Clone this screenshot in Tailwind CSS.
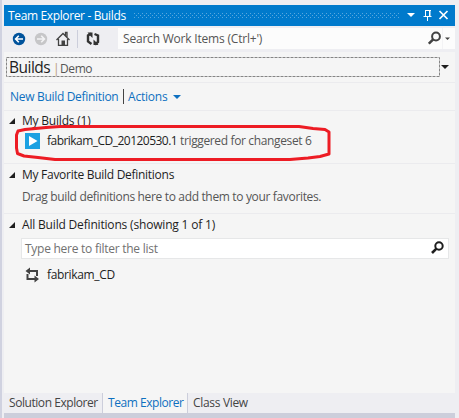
<!DOCTYPE html>
<html lang="en">
<head>
<meta charset="utf-8">
<title>Team Explorer - Builds</title>
<script src="https://cdn.jsdelivr.net/npm/@tailwindcss/browser@4"></script>
</head>
<body class="w-[459px] h-[418px] overflow-hidden bg-[#eeeef2] font-['Open_Sans','Noto_Sans',sans-serif] text-[12px] leading-[16px] text-[#1e1e1e] whitespace-nowrap">
<div class="relative w-[459px] h-[418px] border-l-2 border-[#d0d2e0] pl-[2px] pr-[4px] pt-[5px] flex flex-col">
  <header class="h-[21px] shrink-0 bg-[#007acc] text-white flex items-center pl-[4px]">
    <span class="w-[126px] tracking-[-0.36px]">Team Explorer - Builds</span>
    <svg class="w-[266px] h-[5px]" width="266" height="5" shape-rendering="crispEdges"><defs><pattern id="grip" width="4" height="4" patternUnits="userSpaceOnUse"><path fill="#59a8de" d="M0 0h1v1H0zM2 2h1v1H2z"/></pattern></defs><rect width="266" height="5" fill="url(#grip)"/></svg>
    <svg class="ml-[7px]" width="48" height="21" fill="none" stroke="#fff"><path fill="#fff" stroke="none" d="M0 8h8l-4 4z"/><path d="M18.500 5v6M23 5v6M18 5.500h6M16.500 11.500h8M20.500 12v4M22.500 5v6"/><path stroke-width="1.700" d="M32.500 6l8 8M40.500 6l-8 8"/></svg>
  </header>
  <div class="h-[26px] shrink-0 pt-[2px] flex">
    <svg class="w-[114px]" width="114" height="24" fill="none">
      <circle cx="15" cy="11" r="6.200" fill="#00539c"/><path stroke="#fff" stroke-width="1.600" d="M19 11h-7M14.800 7.800L11.600 11l3.200 3.200"/>
      <circle cx="37" cy="11" r="6.200" fill="#c6c6c8"/><path stroke="#f3f3f5" stroke-width="1.600" d="M33 11h7M37.200 7.800l3.200 3.200-3.200 3.200"/>
      <path stroke="#424242" stroke-width="1.300" d="M52.500 12L59 5.500l6.500 6.500M54.500 11v6.400h9V11M61.500 8V4.500h1.500v5"/><path fill="#424242" d="M57.500 12.500h3.500V17h-3.500z"/>
      <path stroke="#cccedb" d="M73.500 2v18"/>
      <path stroke="#333" stroke-width="2.400" d="M87.500 16L84 13.500V7.500L87 5.500M90.500 6L94 7.500V14L91 16.500"/><path fill="#333" d="M83.500 4.500H88.500V10L86.500 8zM94.500 17H89.500V11.500L91.500 13.500z"/>
    </svg>
    <div class="w-[337px] h-[21px] bg-[#fcfcfc] flex items-center text-[#555]">
      <span class="w-[310px] pl-[5px] tracking-[-0.2px]">Search Work Items (Ctrl+')</span>
      <svg width="27" height="21" fill="none"><circle cx="8" cy="8.500" r="3.900" stroke="#424242" stroke-width="2"/><path stroke="#424242" stroke-width="2.600" d="M5.200 11.300L.8 15.700"/><path stroke="#f3f3f5" d="M14.500 0v21"/><path fill="#424242" d="M17 9.500h5l-2.500 2.500z"/></svg>
    </div>
  </div>
  <main class="h-[341px] shrink-0 bg-[#f5f5f5] flex flex-col">
    <div class="h-[31px] shrink-0 border-b border-[#ebebee] pt-[5px] pl-[2px] flex">
      <div class="w-[434px] h-[20px]">
        <svg class="absolute" width="434" height="20"><rect x=".5" y=".5" width="433" height="19" fill="none" stroke="#858585" stroke-dasharray="3 1"/></svg>
        <div class="flex items-baseline pl-[3px] h-[20px] leading-[20px]">
          <span class="w-[42px] text-[15.500px] tracking-[-0.5px]">Builds</span><span class="w-[9px] pl-[2px] text-[#b99a78]">|</span><span class="text-[#555] tracking-[-0.4px]">Demo</span>
        </div>
      </div>
      <svg class="ml-[1px]" width="9" height="20"><path fill="#1e1e1e" d="M0 8h8L4 12z"/></svg>
    </div>
    <div class="h-[28px] shrink-0 border-b border-[#ebebee] flex items-center pl-[6px] text-[#0e70c0]">
      <span class="w-[113px] tracking-[-0.31px]">New Build Definition</span>
      <span class="w-px h-[15px] bg-[#444]"></span>
      <span class="ml-[4px] w-[45px] tracking-[-0.2px]">Actions</span>
      <svg width="8" height="6"><path fill="#0e70c0" d="M0 1h8L4 5z"/></svg>
    </div>
    <section class="h-[53px] shrink-0 border-b border-[#ebebee] pt-[2px]">
      <h2 class="flex items-center h-[16px] pl-[5px] font-medium"><svg class="w-[13px]" width="13" height="7"><path fill="#1e1e1e" d="M6 0v6H0z"/></svg><span class="tracking-[-0.2px]">My Builds (1)</span></h2>
      <div class="flex items-center h-[16px] mt-[4px] pl-[21px]">
        <svg class="w-[22px] shrink-0" width="15" height="16"><path fill="#1ba1e2" d="M0 0h15v16H0z"/><path fill="#fff" d="M4 3l8.500 5L4 13z"/></svg>
        <span class="w-[133px] tracking-[-0.53px]">fabrikam_CD_20120530.1</span><span class="text-[#555] tracking-[-0.36px]">triggered for changeset 6</span>
      </div>
    </section>
    <section class="h-[50px] shrink-0 border-b border-[#ebebee] pt-[3px]">
      <h2 class="flex items-center h-[16px] pl-[5px] font-medium"><svg class="w-[13px]" width="13" height="7"><path fill="#1e1e1e" d="M6 0v6H0z"/></svg><span class="tracking-[-0.28px]">My Favorite Build Definitions</span></h2>
      <p class="mt-[6px] pl-[18px] text-[#555] tracking-[-0.34px]">Drag build definitions here to add them to your favorites.</p>
    </section>
    <section class="pt-[3px]">
      <h2 class="flex items-center h-[16px] pl-[5px] font-medium"><svg class="w-[13px]" width="13" height="7"><path fill="#1e1e1e" d="M6 0v6H0z"/></svg><span class="tracking-[-0.18px]">All Build Definitions (showing 1 of 1)</span></h2>
      <div class="mt-[5px] ml-[17px] w-[428px] h-[21px] border border-[#e6e7e8] bg-white flex items-center pl-[3px] text-[#717171]">
        <span class="w-[405px] tracking-[-0.26px]">Type here to filter the list</span>
        <svg width="16" height="19" fill="none" stroke="#1e1e1e"><circle cx="9" cy="7" r="3.700" stroke-width="2"/><path stroke-width="2.600" d="M6.400 9.600L2 14"/></svg>
      </div>
      <div class="flex items-center h-[16px] mt-[8px] pl-[21px]">
        <svg class="w-[22px] shrink-0" width="22" height="16" fill="none"><path stroke="#424242" stroke-width="2" d="M4 4h8v5M2.500 7v5h8"/><path fill="#424242" d="M5 .5v7L.5 4zM9.500 8.500v7l4.500-3.500z"/></svg>
        <span class="tracking-[-0.35px]">fabrikam_CD</span>
      </div>
    </section>
  </main>
  <nav class="h-[20px] shrink-0 flex items-center text-[#444]">
    <span class="w-[99px] h-[20px] leading-[20px] pl-[5px] border-r border-[#cccedb] tracking-[-0.44px]">Solution Explorer</span>
    <span class="w-[85px] h-[20px] leading-[20px] pl-[5px] border-r border-[#cccedb] bg-[#f5f5f5] text-[#0e70c0] tracking-[-0.45px]">Team Explorer</span>
    <span class="pl-[5px] leading-[20px] tracking-[-0.32px]">Class View</span>
  </nav>
  <footer class="h-[5px] shrink-0 bg-[#cccedb]"></footer>
  <svg class="absolute left-[-2px] top-0 pointer-events-none" width="459" height="418" fill="none" stroke="#ed1c24" stroke-width="3" stroke-linejoin="round"><path d="M46 127.500L60 126.500H299L313 128.500L325 129.500L329 132V154L320 156.500L308 158L290 159.500H55L38 157.500L24 156L17.500 153.500L16.500 148V135L18 131L25 129.500Z"/></svg>
</div>
</body>
</html>
